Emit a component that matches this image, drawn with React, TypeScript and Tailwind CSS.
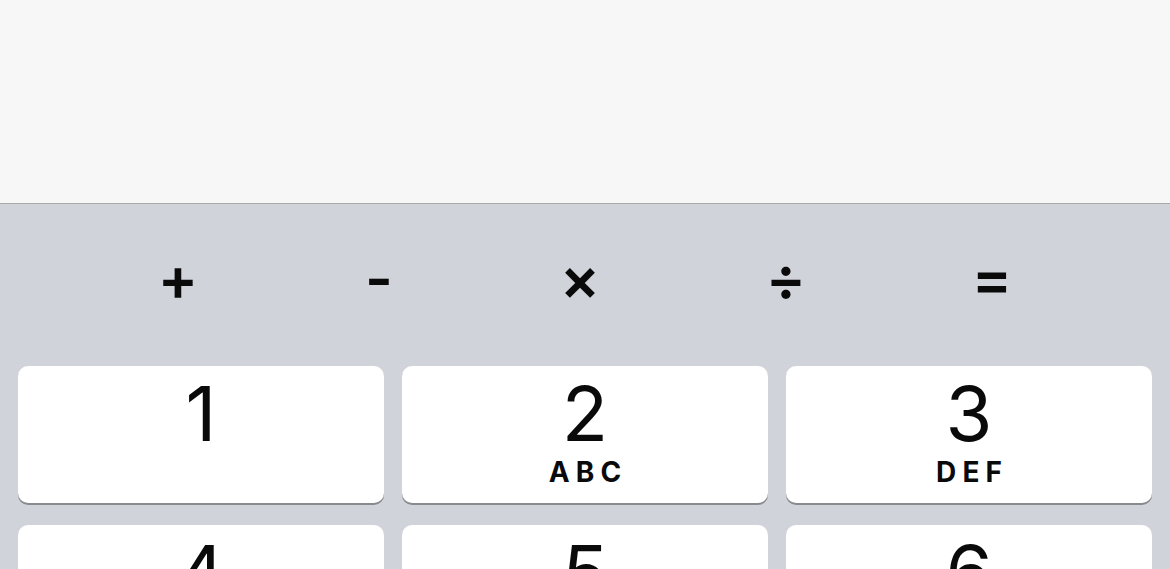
import React from "react";

const ops = ["+", "-", "×", "÷", "="];

const keys = [
  { n: "1", l: "" },
  { n: "2", l: "ABC" },
  { n: "3", l: "DEF" },
  { n: "4", l: "GHI" },
  { n: "5", l: "JKL" },
  { n: "6", l: "MNO" },
  { n: "7", l: "PQRS" },
  { n: "8", l: "TUV" },
  { n: "9", l: "WXYZ" },
];

export default function App() {
  return (
    <div
      className="h-[569px] w-full overflow-hidden bg-[#d1d3da] text-[#0a0a0a]"
      style={{ fontFamily: "Inter, 'Noto Sans', sans-serif" }}
    >
      {/* Display area */}
      <div className="h-[204px] border-b border-[#a9a9ab] bg-[#f7f7f7]" />

      {/* Operators */}
      <div className="grid h-[148px] grid-cols-[202px_200px_202px_210px_202px] items-center pl-[77px]">
        {ops.map((op) => (
          <div key={op} className="text-center text-[60px] font-semibold leading-none">
            {op}
          </div>
        ))}
      </div>

      {/* Number keys */}
      <div className="mt-[14px] grid grid-cols-3 gap-x-[18px] gap-y-[22px] px-[18px]">
        {keys.map((k) => (
          <div
            key={k.n}
            className="flex h-[137px] flex-col items-center rounded-[10px] bg-white pt-[9px] shadow-[0_2px_0_#898a8d]"
          >
            <span className="text-[76px] leading-none font-normal">{k.n}</span>
            {k.l && (
              <span className="mt-[7px] pl-[0.22em] text-[28px] leading-none font-bold tracking-[0.22em]">
                {k.l}
              </span>
            )}
          </div>
        ))}
      </div>
    </div>
  );
}
